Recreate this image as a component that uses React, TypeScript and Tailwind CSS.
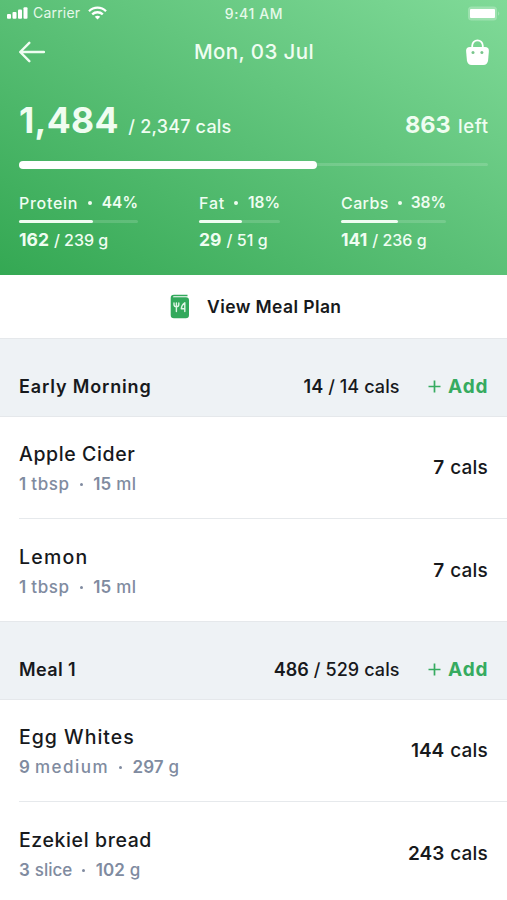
import React from "react";

type Macro = { name: string; pct: string; eaten: string; goal: string; width: string; bar: string; nameCls: string; goalCls: string };
type Item = { name: string; nameCls: string; qty: string; unit: string; unitCls: string; weight: string; wUnit: string; cals: string };

const macros: Macro[] = [
  { name: "Protein", pct: "44%", eaten: "162", goal: "/ 239 g", width: "w-[119px] mr-[61px]", bar: "w-[74px]", nameCls: "tracking-[0.7px]", goalCls: "" },
  { name: "Fat", pct: "18%", eaten: "29", goal: "/ 51 g", width: "w-[81px] mr-[61px]", bar: "w-[43px]", nameCls: "tracking-[0.8px]", goalCls: "tracking-[0.1px]" },
  { name: "Carbs", pct: "38%", eaten: "141", goal: "/ 236 g", width: "w-[105px]", bar: "w-[57px]", nameCls: "tracking-[0.4px]", goalCls: "" },
];

const morning: Item[] = [
  { name: "Apple Cider", nameCls: "tracking-[0.6px]", qty: "1", unit: "tbsp", unitCls: "tracking-[0.65px]", weight: "15", wUnit: "ml", cals: "7" },
  { name: "Lemon", nameCls: "tracking-[1.2px]", qty: "1", unit: "tbsp", unitCls: "tracking-[0.65px]", weight: "15", wUnit: "ml", cals: "7" },
];

const mealOne: Item[] = [
  { name: "Egg Whites", nameCls: "tracking-[1px]", qty: "9", unit: "medium", unitCls: "tracking-[1.5px]", weight: "297", wUnit: "g", cals: "144" },
  { name: "Ezekiel bread", nameCls: "tracking-[0.6px]", qty: "3", unit: "slice", unitCls: "tracking-[0px]", weight: "102", wUnit: "g", cals: "243" },
];

function StatusBar() {
  return (
    <div className="grid h-[26px] grid-cols-3 items-center pl-[7px] pr-[6px] text-[#e6f9ea]">
      <div className="flex items-center">
        <svg width="21" height="12" viewBox="0 0 21 12" fill="white">
          <rect x="0" y="7" width="4" height="4.8" rx="1" />
          <rect x="5.5" y="5" width="4" height="6.8" rx="1" />
          <rect x="11" y="2.6" width="4" height="9.2" rx="1" />
          <rect x="16.5" y="0.2" width="4" height="11.6" rx="1" />
        </svg>
        <span className="ml-[5px] text-[14px] leading-none tracking-[0.2px]">Carrier</span>
        <svg className="ml-[8px]" width="19" height="14" viewBox="0 0 19 14" fill="none" stroke="white" strokeWidth="2.3">
          <path d="M1 5.2C5.7 .5 13.3 .5 18 5.2" />
          <path d="M4.2 8.4C7.2 5.5 11.8 5.5 14.8 8.4" />
          <path d="M6.8 10.7C8.3 9.3 10.7 9.3 12.2 10.7L9.5 13.5Z" fill="white" stroke="none" />
        </svg>
      </div>
      <div className="whitespace-nowrap pt-px text-center text-[14px] font-medium leading-none tracking-[0.6px]">9:41 AM</div>
      <svg className="justify-self-end" width="33" height="15" viewBox="0 0 33 15">
        <rect x="0" y="0.5" width="29" height="14" rx="3.5" fill="white" fillOpacity=".25" />
        <rect x="2" y="3" width="25" height="9" rx="1" fill="white" />
        <path d="M30.3 5.2Q32.2 7.5 30.3 9.8Z" fill="white" fillOpacity=".4" />
      </svg>
    </div>
  );
}

function Header() {
  return (
    <header className="h-[275px] bg-[linear-gradient(29deg,#34a853_0%,#59bf75_48%,#80da98_100%)] text-[#effdf1]">
      <StatusBar />
      <div className="flex h-[52px] items-center justify-between pl-[19px] pr-[18px]">
        <svg width="26" height="22" viewBox="0 0 26 22" fill="none" stroke="#effdf1" strokeWidth="2.4" strokeLinecap="round" strokeLinejoin="round">
          <path d="M25 11H1.5M10.3 1.8L1.2 11L10.3 20.2" />
        </svg>
        <div className="ml-[-3px] pt-px text-[20.5px] font-medium leading-none tracking-[0.4px]">Mon, 03 Jul</div>
        <svg width="23" height="27" viewBox="0 0 23 27">
          <path d="M6.2 9V6.7a5.3 5.3 0 0 1 10.6 0V9" fill="none" stroke="white" strokeWidth="1.8" />
          <path d="M4 8H19Q23 8 22.9 12L22.1 21.3Q21.6 26 17.3 26H5.7Q1.4 26 .9 21.3L.1 12Q0 8 4 8Z" fill="white" />
          <circle cx="7" cy="13.4" r="1.5" fill="#79c58c" />
          <circle cx="15.9" cy="13.4" r="1.5" fill="#79c58c" />
        </svg>
      </div>
      <div className="mx-[19px] flex h-[56px] items-baseline pt-[24px] leading-[38px]">
        <span className="text-[35.5px] font-bold tracking-[0.3px]">1,484</span>
        <span className="ml-[9.5px] text-[18px] font-medium tracking-[0.2px]">/ 2,347 cals</span>
        <span className="ml-auto text-[23.5px] font-bold">863</span>
        <span className="ml-[7.5px] mr-[-0.7px] text-[18.5px] font-medium tracking-[0.6px]">left</span>
      </div>
      <div className="mx-[19px] mt-[26.5px] flex h-[8px] items-center">
        <div className="h-[8px] w-[298px] rounded-full bg-white" />
        <div className="h-[3px] flex-1 rounded-r-full bg-white/15" />
      </div>
      <div className="ml-[19px] mt-[23px] flex">
        {macros.map((m) => (
          <div key={m.name} className={m.width}>
            <div className="flex h-[20px] items-center justify-between whitespace-nowrap pt-[2px] text-[16px] leading-[20px]">
              <span className={"font-medium " + m.nameCls}>{m.name}</span>
              <span className="size-[4px] rounded-full bg-current" />
              <span className="text-[15.5px] font-semibold">{m.pct}</span>
            </div>
            <div className="mt-[8px] h-[3px] rounded-full bg-white/15">
              <div className={"h-[3px] rounded-full bg-[#effdf1] " + m.bar} />
            </div>
            <div className="mt-[7px] flex h-[20px] items-baseline whitespace-nowrap leading-[20px]">
              <span className="text-[17.5px] font-bold">{m.eaten}</span>
              <span className={"ml-[5px] text-[16px] font-medium " + m.goalCls}>{m.goal}</span>
            </div>
          </div>
        ))}
      </div>
    </header>
  );
}

function SectionHead({ title, titleCls, eaten, goal }: { title: string; titleCls: string; eaten: string; goal: string }) {
  return (
    <div className="flex h-[79px] items-baseline border-y border-[#e5e8eb] bg-[#eef2f5] px-[19px] pt-[34.5px] text-[18px] leading-[26px]">
      <span className={"font-semibold " + titleCls}>{title}</span>
      <span className="ml-auto font-semibold">{eaten}</span>
      <span className="ml-[5px] font-[450] tracking-[0.1px]">/ {goal} cals</span>
      <svg className="ml-[28px] mt-[6.5px] self-start" width="13" height="13" viewBox="0 0 13 13" stroke="#36ab60" strokeWidth="1.7">
        <path d="M6.5 .5V12.5M.5 6.5H12.5" />
      </svg>
      <span className="ml-[7.5px] mr-[-0.5px] text-[19px] font-bold tracking-[0.9px] text-[#36ab60]">Add</span>
    </div>
  );
}

function Rows({ items, heights }: { items: Item[]; heights: string[] }) {
  return (
    <div className="pl-[19px]">
      {items.map((it, i) => (
        <div key={it.name} className={"flex justify-between pr-[19px] " + heights[i]}>
          <div className="pt-[24px]">
            <div className={"text-[19.5px] font-[450] leading-[26px] " + it.nameCls}>{it.name}</div>
            <div className="mt-[5px] flex items-center text-[17px] leading-[24px] text-[#808ba0]">
              <span className="font-semibold">{it.qty}</span>
              <span className={"ml-[5px] font-[450] " + it.unitCls}>{it.unit}</span>
              <span className="ml-[10px] mr-[10.5px] size-[3px] rounded-full bg-current" />
              <span className="font-semibold">{it.weight}</span>
              <span className="ml-[5px] font-[450] tracking-[0.6px]">{it.wUnit}</span>
            </div>
          </div>
          <div className="flex items-baseline pt-[38px] text-[19px] leading-[26px]">
            <span className="font-semibold">{it.cals}</span>
            <span className="ml-[6px] font-[450] tracking-[0.2px]">cals</span>
          </div>
        </div>
      ))}
    </div>
  );
}

export default function App() {
  return (
    <main className="h-[900px] w-[507px] overflow-hidden bg-white font-['Inter','Liberation_Sans',sans-serif] text-[#17191c]">
      <Header />
      <div className="flex h-[63px] items-center justify-center pl-[4px]">
        <svg className="mr-[17.5px]" width="20" height="25" viewBox="0 0 20 25">
          <path d="M4 .8H17.5V2.2H4Q2.8 2.3 3 3.2H16Q19 3.2 19 6.2V21Q19 24.2 15.8 24.2H4Q.7 24.2 .7 21V4Q.7 .8 4 .8Z" fill="#32a95b" />
          <g fill="none" stroke="#e0f6e6" strokeWidth="1.4" strokeLinecap="round" strokeLinejoin="round">
            <path d="M4 9V10.5Q4 12.8 6.4 12.8Q8.8 12.8 8.8 10.5V9M6.4 9V17.6" />
            <path d="M14.8 17.6V8.8Q11.6 10.8 11.3 14.8H14.8" />
          </g>
        </svg>
        <span className="pt-[2px] text-[17.5px] font-semibold tracking-[0.4px]">View Meal Plan</span>
      </div>
      <SectionHead title="Early Morning" titleCls="tracking-[0.85px]" eaten="14" goal="14" />
      <Rows items={morning} heights={["h-[102px] border-b border-[#e6e9ec]", "h-[102px] pt-px"]} />
      <SectionHead title="Meal 1" titleCls="tracking-[0.4px]" eaten="486" goal="529" />
      <Rows items={mealOne} heights={["h-[102px] border-b border-[#e6e9ec]", "h-[102px] pt-px"]} />
    </main>
  );
}
